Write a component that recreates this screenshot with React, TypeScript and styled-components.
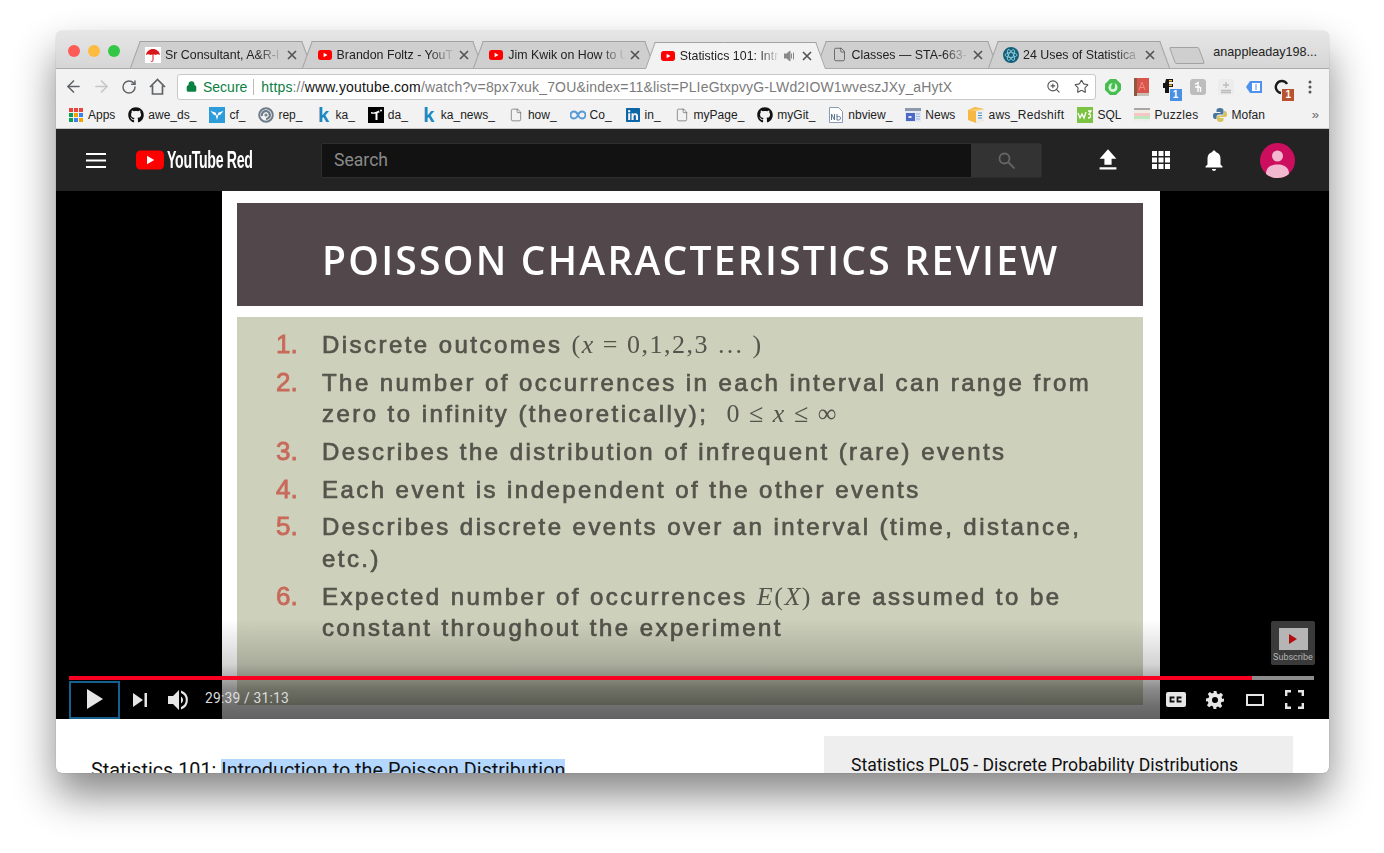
import { ReactNode } from 'react'
import styled, { createGlobalStyle } from 'styled-components'
import { ArrowLeft, ArrowRight, File, Lock, RotateCw, Star, ZoomIn } from 'lucide-react'
import { FaGithub, FaLinkedin } from 'react-icons/fa'

const GlobalStyle = createGlobalStyle`
  html, body {
    margin: 0;
    padding: 0;
    background: #fff;
    font-family: 'Liberation Sans', Arial, sans-serif;
  }
`

const Page = styled.div`
  width: 1384px;
  height: 853px;
  padding: 31px 0 0 56px;
  box-sizing: border-box;
  overflow: hidden;
`

const Window = styled.div`
  position: relative;
  width: 1273px;
  height: 742px;
  border-radius: 6px;
  overflow: hidden;
  display: flex;
  flex-direction: column;
  background: #fff;
  box-shadow: 0 22px 42px rgba(0, 0, 0, 0.48), 0 0 1px rgba(0, 0, 0, 0.4);
`

const TabStrip = styled.div`
  height: 37px;
  flex: none;
  display: flex;
  align-items: flex-end;
  position: relative;
  background: linear-gradient(#e6e6e6, #d6d6d6);
  border-bottom: 1px solid #aaa;
`

const Lights = styled.div`
  display: flex;
  gap: 8px;
  padding: 0 10px 11px 12px;
  align-self: flex-end;
`

const Light = styled.span<{ $color: string }>`
  width: 12px;
  height: 12px;
  border-radius: 50%;
  background: ${({ $color }) => $color};
`

const Tab = styled.div<{ $active?: boolean }>`
  position: relative;
  isolation: isolate;
  width: 181px;
  height: 27px;
  margin-right: -9.4px;
  margin-bottom: ${({ $active }) => ($active ? '-1px' : '0')};
  padding: 0 14px 0 15px;
  box-sizing: border-box;
  display: flex;
  align-items: center;
  gap: 4px;
  font-size: 12.4px;
  color: #222;
  z-index: ${({ $active }) => ($active ? 2 : 1)};
  &::before,
  &::after {
    content: '';
    position: absolute;
    top: 0;
    bottom: 0;
    width: 50%;
    z-index: -1;
    background: ${({ $active }) => ($active ? '#f2f2f2' : '#cfcfcf')};
    border-top: 1px solid #a2a2a2;
  }
  &::before {
    left: 0;
    border-left: 1px solid #a2a2a2;
    transform-origin: bottom left;
    transform: skewX(-20deg);
  }
  &::after {
    right: 0;
    border-right: 1px solid #a2a2a2;
    transform-origin: bottom right;
    transform: skewX(20deg);
  }
`

const TabIcon = styled.span`
  width: 16px;
  height: 16px;
  flex: none;
  display: flex;
  align-items: center;
  justify-content: center;
`

const TabTitle = styled.span`
  flex: 1;
  min-width: 0;
  white-space: nowrap;
  overflow: hidden;
  -webkit-mask-image: linear-gradient(to right, #000 78%, transparent 100%);
  mask-image: linear-gradient(to right, #000 78%, transparent 100%);
`

const AudioIcon = styled.svg`
  flex: none;
  margin-right: 2px;
`

const TabClose = styled.span`
  width: 10px;
  flex: none;
  display: flex;
  color: #555;
`

const NewTab = styled.div`
  width: 28px;
  height: 15px;
  margin: 0 0 4px 12px;
  flex: none;
  background: #cfcfcf;
  border: 1px solid #a2a2a2;
  border-radius: 2px;
  transform: skewX(20deg);
`

const Profile = styled.span`
  position: absolute;
  right: 12px;
  top: 14px;
  font-size: 12.6px;
  color: #222;
`

const Toolbar = styled.div`
  height: 33px;
  flex: none;
  display: flex;
  align-items: center;
  box-sizing: border-box;
  background: #f2f2f2;
  padding: 2px 0 0 3px;
`

const NavButton = styled.span<{ $dim?: boolean }>`
  width: 28px;
  height: 28px;
  flex: none;
  display: flex;
  align-items: center;
  justify-content: center;
  color: ${({ $dim }) => ($dim ? '#c6c6c6' : '#5f6368')};
`

const Omnibox = styled.div`
  width: 919px;
  height: 26px;
  margin-left: 6px;
  box-sizing: border-box;
  flex: none;
  display: flex;
  align-items: center;
  background: #fff;
  border: 1px solid #c8c8c8;
  border-radius: 3px;
  padding: 0 6px 0 8px;
  font-size: 14px;
  color: #7b7b7b;
`

const Secure = styled.span`
  display: flex;
  align-items: center;
  gap: 6px;
  color: #0b8043;
  padding-right: 6px;
  margin-right: 7px;
  border-right: 1px solid #bbb;
  height: 16px;
`

const Url = styled.span`
  flex: 1;
  white-space: nowrap;
  letter-spacing: 0.17px;
`

const UrlGreen = styled.span`
  color: #0b8043;
`

const UrlHost = styled.span`
  color: #111;
`

const OmniIcons = styled.span`
  display: flex;
  align-items: center;
  gap: 13px;
  color: #555;
`

const Extensions = styled.div`
  display: flex;
  align-items: center;
  margin-left: 3px;
`

const Extension = styled.span`
  position: relative;
  width: 28.2px;
  height: 20px;
  display: flex;
  align-items: center;
  justify-content: center;
`

const ExtBadge = styled.span<{ $color: string }>`
  position: absolute;
  right: 2px;
  bottom: -4px;
  width: 12px;
  height: 12px;
  font-size: 10px;
  font-weight: 700;
  line-height: 12px;
  text-align: center;
  color: #fff;
  background: ${({ $color }) => $color};
`

const BookmarksBar = styled.div`
  height: 27px;
  flex: none;
  display: flex;
  align-items: center;
  gap: 13px;
  padding-left: 12px;
  box-sizing: border-box;
  position: relative;
  background: #f2f2f2;
  border-bottom: 1px solid #c4c4c4;
  font-size: 12px;
  color: #222;
`

const Bookmark = styled.span<{ $tracking?: number }>`
  display: flex;
  align-items: center;
  gap: 4px;
  white-space: nowrap;
  letter-spacing: ${({ $tracking = 0 }) => $tracking}px;
`

const BookmarkIcon = styled.span`
  width: 16px;
  height: 16px;
  flex: none;
  display: flex;
  align-items: center;
  justify-content: center;
`

const LetterK = styled.span`
  font-size: 20px;
  line-height: 16px;
  font-weight: 700;
  color: #1c88c0;
`

const More = styled.span`
  position: absolute;
  right: 10px;
  top: 5px;
  font-size: 13px;
  color: #666;
`

const Masthead = styled.header`
  height: 62px;
  flex: none;
  display: flex;
  align-items: center;
  background: #232323;
  padding-left: 30px;
`

const Logo = styled.div`
  display: flex;
  align-items: center;
  gap: 3px;
  margin-left: 30px;
  width: 185px;
  flex: none;
`

const Wordmark = styled.span`
  display: inline-block;
  font-size: 23px;
  font-weight: 700;
  letter-spacing: -0.5px;
  color: #fff;
  transform: scaleX(0.615);
  transform-origin: left center;
  white-space: nowrap;
`

const SearchBox = styled.div`
  display: flex;
  width: 721px;
  height: 35px;
  flex: none;
  box-sizing: border-box;
  border: 1px solid #2e2e2e;
  border-radius: 2px;
  background: #333;
`

const SearchInput = styled.div`
  width: 649px;
  flex: none;
  background: #121212;
  color: #8a8a8a;
  font: 17.6px Roboto, sans-serif;
  line-height: 33px;
  padding-left: 12px;
  box-sizing: border-box;
`

const SearchButton = styled.div`
  flex: 1;
  display: flex;
  align-items: center;
  justify-content: center;
`

const MastIcons = styled.div`
  display: flex;
  align-items: center;
  margin-left: 54px;
  gap: 29px;
`

const Avatar = styled.span`
  margin-left: 34px;
  display: flex;
`

const Player = styled.section`
  position: relative;
  height: 528px;
  flex: none;
  background: #000;
  display: flex;
  justify-content: center;
  overflow: hidden;
`

const Slide = styled.div`
  width: 938px;
  height: 100%;
  margin-right: 3px;
  box-sizing: border-box;
  background: #fff;
  padding: 12px 17px 14px 15px;
  display: flex;
  flex-direction: column;
  gap: 11px;
  filter: blur(0.35px);
`

const SlideTitle = styled.h1`
  height: 103px;
  flex: none;
  margin: 0;
  background: #52474b;
  color: #fff;
  box-sizing: border-box;
  padding: 10px 0 0 85px;
  display: flex;
  align-items: center;
  font: 600 39px 'Open Sans', 'Liberation Sans', sans-serif;
  letter-spacing: 2.25px;
  white-space: nowrap;
`

const SlideBody = styled.ol`
  flex: 1;
  margin: 0;
  background: #cdd0bb;
  list-style: none;
  padding: 12px 0 0 39px;
  display: flex;
  flex-direction: column;
  gap: 6.5px;
  font: 700 26px/31.3px 'Liberation Sans', sans-serif;
  color: #55534b;
`

const SlideItem = styled.li`
  display: flex;
`

const ItemNumber = styled.span`
  width: 46px;
  flex: none;
  color: #c8695a;
  font-weight: 400;
  -webkit-text-stroke: 0.8px #c8695a;
`

const ItemText = styled.span`
  font-size: 24px;
  font-weight: 400;
  -webkit-text-stroke: 0.7px #55534b;
  letter-spacing: 2.45px;
  white-space: pre;
`

const MathText = styled.span`
  font-family: 'Liberation Serif', serif;
  font-size: 26px;
  -webkit-text-stroke: 0;
  letter-spacing: 1.5px;
`

const MathItalic = styled.i`
  font-family: 'Liberation Serif', serif;
`

const Scrim = styled.div`
  position: absolute;
  left: 0;
  right: 0;
  bottom: 0;
  height: 100px;
  background: linear-gradient(
    rgba(0, 0, 0, 0),
    rgba(0, 0, 0, 0.17) 45%,
    rgba(0, 0, 0, 0.46) 70%,
    rgba(0, 0, 0, 0.56) 86%,
    rgba(0, 0, 0, 0.62)
  );
`

const Watermark = styled.div`
  position: absolute;
  right: 14px;
  top: 430px;
  width: 44px;
  height: 44px;
  border-radius: 2px;
  background: #3a3a3a;
  display: flex;
  flex-direction: column;
  align-items: center;
  padding-top: 7px;
  box-sizing: border-box;
  color: #b4b4b4;
  font: 9px Roboto, sans-serif;
  gap: 2px;
`

const WatermarkThumb = styled.span`
  width: 29px;
  height: 22px;
  flex: none;
  background: #b5b5b5;
  display: flex;
  align-items: center;
  justify-content: center;
`

const Controls = styled.div`
  position: absolute;
  left: 13px;
  right: 15px;
  bottom: 0;
  display: flex;
  flex-direction: column;
`

const Progress = styled.div`
  height: 4px;
  background: #8c8c8c;
`

const ProgressFill = styled.div`
  height: 100%;
  background: #f8001f;
`

const ControlRow = styled.div`
  height: 39px;
  display: flex;
  align-items: center;
`

const PlayButton = styled.span`
  width: 51px;
  height: 38px;
  flex: none;
  box-sizing: border-box;
  border: 2px solid #14608f;
  padding-bottom: 2px;
  display: flex;
  align-items: center;
  justify-content: center;
`

const ControlIcon = styled.span<{ $width: number }>`
  width: ${({ $width }) => $width}px;
  flex: none;
  height: 38px;
  display: flex;
  align-items: center;
  justify-content: center;
`

const TimeLabel = styled.span`
  font: 13.8px Roboto, sans-serif;
  letter-spacing: 0.2px;
  color: #ddd;
  margin-left: 7px;
  padding-bottom: 4px;
  flex: 1;
`

const Below = styled.div`
  flex: 1;
  min-height: 0;
  display: flex;
  justify-content: space-between;
  padding: 17px 36px 0 35px;
  font: 19.8px/22px Roboto, sans-serif;
  color: #111;
  overflow: hidden;
`

const VideoTitle = styled.div`
  padding-top: 24px;
  white-space: nowrap;
`

const Selected = styled.span`
  background: #b3d7ff;
`

const PlaylistPanel = styled.div`
  width: 469px;
  height: 120px;
  flex: none;
  background: #eee;
  padding: 18px 0 0 27px;
  box-sizing: border-box;
  font-size: 17.6px;
`

const YtGlyph = ({ size = 14 }: { size?: number }) => (
  <svg width={size} height={size} viewBox="0 0 24 24">
    <rect x="0" y="3.5" width="24" height="17" rx="4.5" fill="#f00" />
    <path d="M9.6 8.2v7.6l6.6-3.8z" fill="#fff" />
  </svg>
)

const CloseX = () => (
  <svg width="10" height="10" viewBox="0 0 10 10">
    <path d="M1 1l8 8M9 1l-8 8" stroke="currentColor" strokeWidth="1.7" />
  </svg>
)

const tabs: { title: string; icon: ReactNode; active?: boolean; audio?: boolean }[] = [
  {
    title: 'Sr Consultant, A&R-I',
    icon: (
      <svg width="16" height="16" viewBox="0 0 16 16">
        <rect width="16" height="16" fill="#fff" />
        <path d="M1 8c.5-3.500 3.500-6 7-6s6.500 2.500 7 6c-1.700-1.100-3-1.100-4.500 0-.8-.8-4.200-.8-5 0C4 6.900 2.700 6.900 1 8z" fill="#d8161c" />
        <path d="M8 7v6.500c0 1.300-1.800 1.300-2.200.4" stroke="#d8161c" fill="none" />
      </svg>
    ),
  },
  { title: 'Brandon Foltz - YouT', icon: <YtGlyph /> },
  { title: 'Jim Kwik on How to U', icon: <YtGlyph /> },
  { title: 'Statistics 101: Intr', icon: <YtGlyph />, active: true, audio: true },
  { title: 'Classes — STA-663-', icon: <File size={15} strokeWidth={1.3} color="#555" /> },
  {
    title: '24 Uses of Statistica',
    icon: (
      <svg width="16" height="16" viewBox="0 0 16 16">
        <circle cx="8" cy="8" r="8" fill="#12607a" />
        <g fill="none" stroke="#9fd3e0" strokeWidth="0.8">
          <ellipse cx="8" cy="8" rx="6" ry="2.400" />
          <ellipse cx="8" cy="8" rx="6" ry="2.400" transform="rotate(60 8 8)" />
          <ellipse cx="8" cy="8" rx="6" ry="2.400" transform="rotate(120 8 8)" />
        </g>
      </svg>
    ),
  },
]

const AppsIcon = () => {
  const colors = ['#e8453c', '#e8453c', '#e8453c', '#0f9d58', '#f4a400', '#3b82f0', '#0f9d58', '#3b82f0', '#f4a400']
  return (
    <svg width="14" height="14" viewBox="0 0 14 14">
      {colors.map((fill, i) => (
        <rect key={i} x={(i % 3) * 5} y={Math.floor(i / 3) * 5} width="4" height="4" fill={fill} />
      ))}
    </svg>
  )
}

const DocIcon = () => <File size={14} strokeWidth={1.2} color="#666" />

const bookmarks: { label: string; icon: ReactNode; tracking?: number }[] = [
  { label: 'Apps', icon: <AppsIcon /> },
  { label: 'awe_ds_', icon: <FaGithub size={16} color="#111" /> },
  {
    label: 'cf_',
    icon: (
      <svg width="16" height="16" viewBox="0 0 16 16">
        <rect width="16" height="16" fill="#2d9cdb" />
        <path d="M1.500 4l5 1.500L8 9l1.500-3.500 5-1.500-3.500 4-1.500 0L8 13 6.500 8 5 8z" fill="#fff" />
      </svg>
    ),
  },
  {
    label: 'rep_',
    icon: (
      <svg width="16" height="16" viewBox="0 0 16 16" fill="none" stroke="#6d7c88">
        <circle cx="8" cy="8" r="6.800" strokeWidth="2" />
        <path d="M4 9a4 4 0 1 1 4 3" strokeWidth="2.200" />
        <circle cx="8" cy="8" r="1" strokeWidth="1.200" />
      </svg>
    ),
  },
  { label: 'ka_', icon: <LetterK>k</LetterK> },
  {
    label: 'da_',
    icon: (
      <svg width="16" height="16" viewBox="0 0 16 16">
        <rect width="16" height="16" fill="#000" />
        <path d="M3 5c3 1 5 0 8-1.500l.5 2L9.500 6v7H7.500V6.800C6 6.900 4 6.800 3 6.500z" fill="#fff" />
        <circle cx="13" cy="3.500" r="1" fill="#fff" />
      </svg>
    ),
  },
  { label: 'ka_news_', icon: <LetterK>k</LetterK> },
  { label: 'how_', icon: <DocIcon /> },
  {
    label: 'Co_',
    icon: (
      <svg width="16" height="10" viewBox="0 0 16 10" fill="none" stroke="#5b9bd5" strokeWidth="2">
        <path d="M8 5C7 2.500 5.500 1.500 4 1.500a3.500 3.500 0 0 0 0 7C5.500 8.500 7 7.500 8 5c1-2.500 2.500-3.500 4-3.500a3.500 3.500 0 0 1 0 7C10.500 8.500 9 7.500 8 5z" />
      </svg>
    ),
  },
  { label: 'in_', icon: <FaLinkedin size={16} color="#0b66a8" /> },
  { label: 'myPage_', icon: <DocIcon /> },
  { label: 'myGit_', icon: <FaGithub size={16} color="#111" /> },
  {
    label: 'nbview_',
    icon: (
      <svg width="14" height="16" viewBox="0 0 14 16">
        <path d="M.5.500h9l4 4v11H.5z" fill="#fff" stroke="#8a9bb0" />
        <path d="M2.500 13V7l3 6V7M8 7v6c2.500.5 3.500-.5 3.500-2S10 9 8 10" fill="none" stroke="#5d7896" />
      </svg>
    ),
  },
  {
    label: 'News',
    icon: (
      <svg width="16" height="14" viewBox="0 0 16 14">
        <rect width="16" height="14" fill="#e4e8f2" />
        <rect width="16" height="3" fill="#8d99ad" />
        <rect x="1" y="5" width="9" height="8" fill="#4a68c4" />
        <rect x="3.500" y="8" width="3" height="2" fill="#dfe6f7" />
        <path d="M11 6h4M11 8.500h4M11 11h4" stroke="#8fb5ea" />
      </svg>
    ),
  },
  {
    label: 'aws_Redshift',
    tracking: 0.33,
    icon: (
      <svg width="16" height="16" viewBox="0 0 16 16">
        <path d="M0 3l7-3 9 2v11l-8 3-8-3z" fill="#f5b842" />
        <path d="M8 4l8-2v11l-8 3z" fill="#eeeeee" />
        <path d="M8 4l-8-1 8-1 8 0z" fill="#f9d37a" />
        <path d="M10 6h4M10 8.500h4M10 11h4" stroke="#4a90c8" strokeWidth="1.200" />
      </svg>
    ),
  },
  {
    label: 'SQL',
    icon: (
      <svg width="16" height="16" viewBox="0 0 16 16">
        <rect width="16" height="16" fill="#7cc243" />
        <path d="M1 6l2 5 2-4 2 4 2-6M11 4h3l-2 3c2 0 2.500 4-1 4" fill="none" stroke="#fff" strokeWidth="1.300" />
      </svg>
    ),
  },
  {
    label: 'Puzzles',
    tracking: 0.3,
    icon: (
      <svg width="16" height="14" viewBox="0 0 16 14">
        <rect width="16" height="2" fill="#a7a7a7" />
        <rect y="2" width="16" height="3" fill="#f0eee0" />
        <rect y="5" width="16" height="3" fill="#f6c6c6" />
        <rect y="8" width="16" height="3" fill="#bde8bc" />
        <rect y="11" width="16" height="3" fill="#eee" />
      </svg>
    ),
  },
  {
    label: 'Mofan',
    icon: (
      <svg width="16" height="16" viewBox="0 0 16 16">
        <path d="M8 1c-3 0-3.500 1-3.500 2.500V5h4v1H3C1 6 1 8 1 9s.5 3 2 3h1.500v-2c0-1.500 1-2.500 2.500-2.500h3c1 0 1.500-.5 1.500-1.500V3.500C11.500 2 10.500 1 8 1z" fill="#47769f" />
        <path d="M8 15c3 0 3.500-1 3.500-2.500V11h-4v-1H13c2 0 2-2 2-3s-.5-3-2-3h-1v2c0 1.500-1 2.500-2.500 2.500h-3C5.500 8.500 5 9 5 10v2.500C5 14 6 15 8 15z" fill="#d8c35a" />
      </svg>
    ),
  },
]

const App = () => (
  <>
    <GlobalStyle />
    <Page>
      <Window>
        <TabStrip>
          <Lights>
            <Light $color="#fc5b57" />
            <Light $color="#fdbb40" />
            <Light $color="#33c748" />
          </Lights>
          {tabs.map((tab) => (
            <Tab key={tab.title} $active={tab.active}>
              <TabIcon>{tab.icon}</TabIcon>
              <TabTitle>{tab.title}</TabTitle>
              {tab.audio && (
                <AudioIcon width="12" height="12" viewBox="0 0 12 12" fill="#888">
                  <path d="M0 4h2.500L6 1v10L2.500 8H0zM7.500 3.500v5M9.500 2.500v7" stroke="#888" />
                </AudioIcon>
              )}
              <TabClose>
                <CloseX />
              </TabClose>
            </Tab>
          ))}
          <NewTab />
          <Profile>anappleaday198...</Profile>
        </TabStrip>

        <Toolbar>
          <NavButton><ArrowLeft size={19} strokeWidth={2} /></NavButton>
          <NavButton $dim><ArrowRight size={19} strokeWidth={2} /></NavButton>
          <NavButton><RotateCw size={16} strokeWidth={2.2} /></NavButton>
          <NavButton>
            <svg width="17" height="17" viewBox="0 0 17 17" fill="none" stroke="#5f6368" strokeWidth="1.700">
              <path d="M1 9l7.500-7.500L16 9M3.500 7.500V16h10V7.500" />
            </svg>
          </NavButton>
          <Omnibox>
            <Secure>
              <Lock size={11} strokeWidth={3} fill="#0b8043" />
              Secure
            </Secure>
            <Url>
              <UrlGreen>https</UrlGreen>://<UrlHost>www.youtube.com</UrlHost>/watch?v=8px7xuk_7OU&index=11&list=PLIeGtxpvyG-LWd2IOW1wveszJXy_aHytX
            </Url>
            <OmniIcons>
              <ZoomIn size={15} strokeWidth={1.8} />
              <Star size={15} strokeWidth={1.8} />
            </OmniIcons>
          </Omnibox>
          <Extensions>
            <Extension>
              <svg width="16" height="16" viewBox="0 0 16 16">
                <path d="M5 0h6l5 5v6l-5 5H5l-5-5V5z" fill="#46bd4e" />
                <circle cx="8" cy="8.500" r="4.500" fill="#d6f2d6" />
                <path d="M8.500 3c2 1 2 5 .5 7H6.500C5.500 8 6.500 5 8.500 3z" fill="#46bd4e" />
              </svg>
            </Extension>
            <Extension>
              <svg width="15" height="18" viewBox="0 0 15 18">
                <rect width="15" height="18" fill="#d9544a" />
                <rect width="3" height="18" fill="#8c5a44" />
                <path d="M5 12l3-8 3 8M6 9.500h4" fill="none" stroke="#f08a80" />
                <rect x="3" y="15" width="12" height="3" fill="#c9c0b4" />
              </svg>
            </Extension>
            <Extension>
              <svg width="14" height="18" viewBox="0 0 14 18">
                <path d="M4 1h7v3H7v2h4v3H7v6H3v-5H1V5h2z" fill="#151515" />
                <path d="M7 2h3v1.500H7zM7 6.500h3V8H7z" fill="#f3c13a" />
              </svg>
              <ExtBadge $color="#4a90e2">1</ExtBadge>
            </Extension>
            <Extension>
              <svg width="16" height="16" viewBox="0 0 16 16">
                <rect width="16" height="16" rx="3" fill="#bdbdbd" />
                <path d="M5 5.500L8 3.500V13M5 8h5M10.500 8v5" stroke="#fff" strokeWidth="1.400" fill="none" />
              </svg>
            </Extension>
            <Extension>
              <svg width="16" height="16" viewBox="0 0 16 16">
                <rect width="16" height="16" rx="1" fill="#ececec" />
                <path d="M8 3v6M5 6h6M3 11.500h10M3 13.500h10" stroke="#bcbcbc" strokeWidth="1.300" />
              </svg>
            </Extension>
            <Extension>
              <svg width="16" height="14" viewBox="0 0 16 14">
                <path d="M4 1h12v12H4L0 7z" fill="#4f92ee" />
                <rect x="6" y="3" width="8" height="8" fill="#fff" />
                <path d="M10 4v6" stroke="#4f92ee" />
              </svg>
            </Extension>
            <Extension>
              <svg width="16" height="16" viewBox="0 0 16 16" fill="none" stroke="#1b1b1b" strokeWidth="2.400">
                <path d="M13 5a6 6 0 1 0-6 9" />
              </svg>
              <ExtBadge $color="#b9532f">1</ExtBadge>
            </Extension>
            <Extension>
              <svg width="4" height="14" viewBox="0 0 4 14" fill="#555">
                <circle cx="2" cy="2" r="1.500" />
                <circle cx="2" cy="7" r="1.500" />
                <circle cx="2" cy="12" r="1.500" />
              </svg>
            </Extension>
          </Extensions>
        </Toolbar>

        <BookmarksBar>
          {bookmarks.map((item) => (
            <Bookmark key={item.label} $tracking={item.tracking}>
              <BookmarkIcon>{item.icon}</BookmarkIcon>
              {item.label}
            </Bookmark>
          ))}
          <More>»</More>
        </BookmarksBar>

        <Masthead>
          <svg width="20" height="15" viewBox="0 0 20 15" fill="#fff">
            <rect width="20" height="2" />
            <rect y="6.500" width="20" height="2" />
            <rect y="13" width="20" height="2" />
          </svg>
          <Logo>
            <svg width="28" height="20" viewBox="0 0 28 20">
              <rect width="28" height="19" y="0.500" rx="4.500" fill="#f00" />
              <path d="M11 5.800v8.400l7.200-4.200z" fill="#fff" />
            </svg>
            <Wordmark>YouTube Red</Wordmark>
          </Logo>
          <SearchBox>
            <SearchInput>Search</SearchInput>
            <SearchButton>
              <svg width="17" height="17" viewBox="0 0 17 17" fill="none" stroke="#666" strokeWidth="1.800">
                <circle cx="6.500" cy="6.500" r="5" />
                <path d="M10.500 10.500l6 6" />
              </svg>
            </SearchButton>
          </SearchBox>
          <MastIcons>
            <svg width="24" height="24" viewBox="0 0 16 20" fill="#fff">
              <path d="M8 1l7 8h-4v5H5V9H1zM1 16h14v2H1z" />
            </svg>
            <svg width="24" height="24" viewBox="0 0 24 24" fill="#fff">
              {[3, 9.500, 16].flatMap((x) =>
                [3, 9.500, 16].map((y) => <rect key={`${x}-${y}`} x={x} y={y} width="5" height="5" />)
              )}
            </svg>
            <svg width="24" height="24" viewBox="0 0 24 24" fill="#fff">
              <path d="M12 2.500c1 0 1.700.7 1.700 1.600 3 .8 4.800 3.300 4.800 6.400v6l2 2v1h-17v-1l2-2v-6c0-3.100 1.800-5.600 4.800-6.400 0-.9.700-1.600 1.700-1.600zM10 21h4c0 1.100-.9 2-2 2s-2-.9-2-2z" />
            </svg>
          </MastIcons>
          <Avatar>
            <svg width="35" height="35" viewBox="0 0 35 35">
              <circle cx="17.500" cy="17.500" r="17.500" fill="#cc0e5f" />
              <circle cx="17.500" cy="13" r="5.500" fill="#f1b8cf" />
              <path d="M6 31c0-7 5-9.500 11.500-9.500S29 24 29 31c-3 2.500-7 4-11.500 4S9 33.500 6 31z" fill="#f1b8cf" />
            </svg>
          </Avatar>
        </Masthead>

        <Player>
          <Slide>
            <SlideTitle>POISSON CHARACTERISTICS REVIEW</SlideTitle>
            <SlideBody>
              <SlideItem>
                <ItemNumber>1.</ItemNumber>
                <ItemText>
                  Discrete outcomes <MathText>(<MathItalic>x</MathItalic> = 0,1,2,3 … )</MathText>
                </ItemText>
              </SlideItem>
              <SlideItem>
                <ItemNumber>2.</ItemNumber>
                <ItemText>
                  The number of occurrences in each interval can range from{'\n'}zero to infinity (theoretically);  <MathText>0 ≤ <MathItalic>x</MathItalic> ≤ ∞</MathText>
                </ItemText>
              </SlideItem>
              <SlideItem>
                <ItemNumber>3.</ItemNumber>
                <ItemText>Describes the distribution of infrequent (rare) events</ItemText>
              </SlideItem>
              <SlideItem>
                <ItemNumber>4.</ItemNumber>
                <ItemText>Each event is independent of the other events</ItemText>
              </SlideItem>
              <SlideItem>
                <ItemNumber>5.</ItemNumber>
                <ItemText>Describes discrete events over an interval (time, distance,{'\n'}etc.)</ItemText>
              </SlideItem>
              <SlideItem>
                <ItemNumber>6.</ItemNumber>
                <ItemText>
                  Expected number of occurrences <MathText><MathItalic>E</MathItalic>(<MathItalic>X</MathItalic>)</MathText> are assumed to be{'\n'}constant throughout the experiment
                </ItemText>
              </SlideItem>
            </SlideBody>
          </Slide>
          <Scrim />
          <Watermark>
            <WatermarkThumb>
              <svg width="10" height="10" viewBox="0 0 10 10" fill="#b30d10">
                <path d="M1 0l8 5-8 5z" />
              </svg>
            </WatermarkThumb>
            Subscribe
          </Watermark>
          <Controls>
            <Progress>
              <ProgressFill style={{ width: `${(1183 / 1245) * 100}%` }} />
            </Progress>
            <ControlRow>
              <PlayButton>
                <svg width="16" height="20" viewBox="0 0 16 20" fill="#e6e6e6">
                  <path d="M0 0l16 10L0 20z" />
                </svg>
              </PlayButton>
              <ControlIcon $width={40}>
                <svg width="14" height="14" viewBox="0 0 14 14" fill="#e6e6e6">
                  <path d="M0 0l10 7-10 7zM11.500 0H14v14h-2.500z" />
                </svg>
              </ControlIcon>
              <ControlIcon $width={38}>
                <svg width="22" height="22" viewBox="0 0 22 22" fill="#e6e6e6">
                  <path d="M0 7h5l6-6v20l-6-6H0z" />
                  <path d="M13 7.500a4 4 0 0 1 0 7zM13 1.500a10 10 0 0 1 0 19v-2.500a7.500 7.500 0 0 0 0-14z" />
                </svg>
              </ControlIcon>
              <TimeLabel>29:39 / 31:13</TimeLabel>
              <ControlIcon $width={39}>
                <svg width="20" height="15" viewBox="0 0 20 15">
                  <rect width="20" height="15" rx="2" fill="#e6e6e6" />
                  <path d="M8.500 5.500H4.500v4h4M15.500 5.500h-4v4h4" fill="none" stroke="#111" strokeWidth="1.800" />
                </svg>
              </ControlIcon>
              <ControlIcon $width={40}>
                <svg width="18" height="18" viewBox="0 0 24 24" fill="#e6e6e6">
                  <path fillRule="evenodd" d="M10 0h4l.6 3.400 2.400 1 2.900-2 2.800 2.800-2 2.900 1 2.400L24 10v4l-3.300.6-1 2.400 2 2.900-2.800 2.800-2.900-2-2.400 1L14 24h-4l-.6-3.300-2.400-1-2.900 2-2.800-2.800 2-2.900-1-2.400L0 14v-4l3.300-.6 1-2.400-2-2.900L5.100 1.300l2.900 2 2.400-1zM12 8a4 4 0 1 0 0 8 4 4 0 0 0 0-8z" />
                </svg>
              </ControlIcon>
              <ControlIcon $width={40}>
                <svg width="18" height="12" viewBox="0 0 18 12" fill="none" stroke="#e6e6e6" strokeWidth="2">
                  <rect x="1" y="1" width="16" height="10" />
                </svg>
              </ControlIcon>
              <ControlIcon $width={39}>
                <svg width="19" height="19" viewBox="0 0 19 19" fill="none" stroke="#e6e6e6" strokeWidth="2.400">
                  <path d="M1.200 6V1.200H6M13 1.200h4.800V6M17.800 13v4.800H13M6 17.800H1.200V13" />
                </svg>
              </ControlIcon>
            </ControlRow>
          </Controls>
        </Player>

        <Below>
          <VideoTitle>
            Statistics 101: <Selected>Introduction to the Poisson Distribution</Selected>
          </VideoTitle>
          <PlaylistPanel>Statistics PL05 - Discrete Probability Distributions</PlaylistPanel>
        </Below>
      </Window>
    </Page>
  </>
)

export default App
